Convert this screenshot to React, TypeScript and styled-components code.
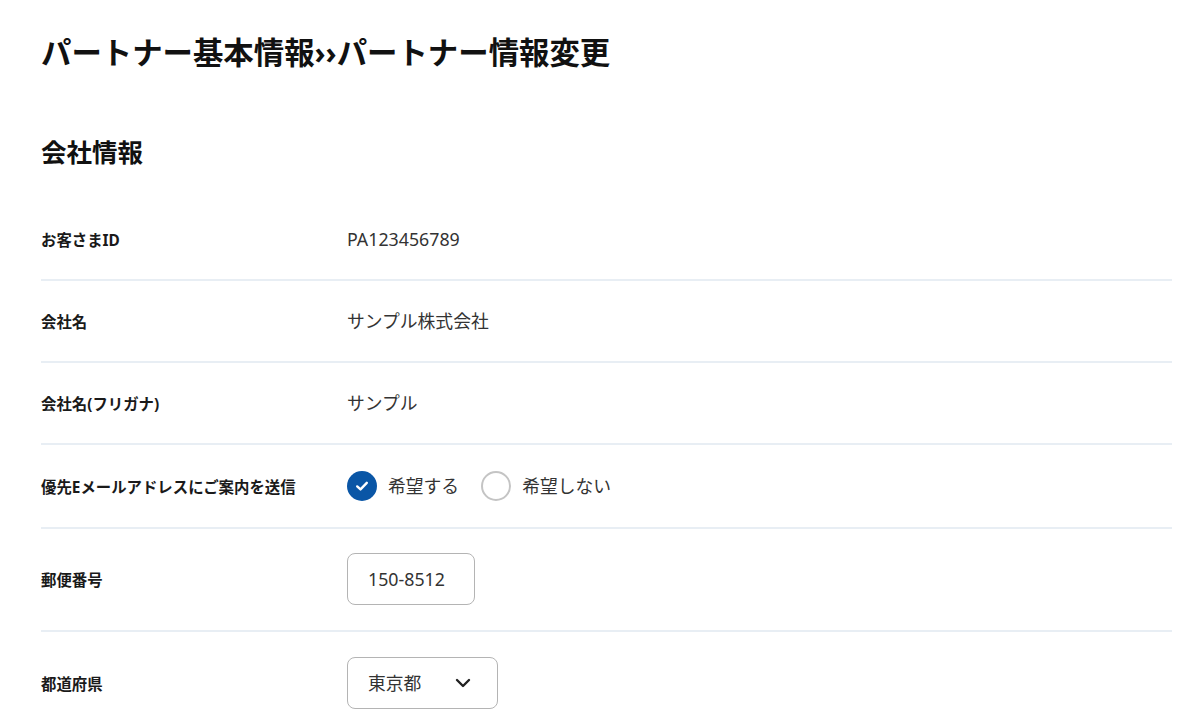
import React from 'react';
import styled, { createGlobalStyle } from 'styled-components';

const FONT = `"Noto Sans", "Noto Sans CJK JP", sans-serif`;
const BORDER = '#e8eef4';

const GlobalStyle = createGlobalStyle`
    body {
        margin: 0;
        background: #fff;
        font-family: ${FONT};
        color: #222;
    }
`;

const Page = styled.div`
    padding: 32px 28px 0 41px;
`;

const PageTitle = styled.h1`
    margin: 0;
    font-size: 30.4px;
    line-height: 42px;
    font-weight: 700;
    color: #111;
`;

const SectionTitle = styled.h2`
    margin: 60px 0 29px;
    font-size: 25.5px;
    line-height: 36px;
    font-weight: 700;
    color: #111;
`;

const Table = styled.div`
    display: flex;
    flex-direction: column;
`;

const Row = styled.div`
    display: grid;
    grid-template-columns: 306px 1fr;
`;

const LabelCell = styled.div`
    display: flex;
    align-items: center;
    border-bottom: 2px solid ${BORDER};
    font-size: 15.4px;
    font-weight: 700;
    color: #1a1a1a;
`;

type ValueCellProps = {
    $pad: number;
    $padBottom?: number;
};

const ValueCell = styled.div<ValueCellProps>`
    display: flex;
    align-items: center;
    padding: ${(p) => p.$pad}px 0 ${(p) => p.$padBottom ?? p.$pad}px;
    border-bottom: 2px solid ${BORDER};
    font-size: 17.8px;
    line-height: 26px;
    color: #333;
`;

const RadioGroup = styled.div`
    display: flex;
    align-items: center;
    gap: 22px;
`;

const RadioItem = styled.label`
    display: flex;
    align-items: center;
    gap: 11px;
    font-size: 17.8px;
    color: #333;
`;

type RadioMarkProps = {
    $checked?: boolean;
};

const RadioMark = styled.span<RadioMarkProps>`
    width: 30px;
    height: 30px;
    box-sizing: border-box;
    border-radius: 50%;
    display: flex;
    align-items: center;
    justify-content: center;
    background: ${(p) => (p.$checked ? '#0a56a6' : '#fff')};
    border: ${(p) => (p.$checked ? 'none' : '2px solid #c4c4c4')};
`;

const TextBox = styled.div`
    width: 128px;
    height: 52px;
    box-sizing: border-box;
    border: 1.5px solid #b4b4b4;
    border-radius: 8px;
    display: flex;
    align-items: center;
    padding-left: 20px;
    font-size: 17.8px;
    color: #333;
`;

const SelectBox = styled(TextBox)`
    width: 151px;
    justify-content: space-between;
    padding-right: 26px;
`;

const CheckIcon = () => (
    <svg width="16" height="16" viewBox="0 0 16 16" fill="none">
        <path d="M3.2 8.4 L6.5 11.4 L12.8 4.8" stroke="#fff" strokeWidth="2.4" strokeLinecap="round" strokeLinejoin="round" />
    </svg>
);

const ChevronIcon = () => (
    <svg width="16" height="12" viewBox="0 0 16 12" fill="none">
        <path d="M2 3 L8 9 L14 3" stroke="#222" strokeWidth="2.4" strokeLinecap="round" strokeLinejoin="round" />
    </svg>
);

const App: React.FC = () => {
    return (
        <Page>
            <GlobalStyle />
            <PageTitle>パートナー基本情報››パートナー情報変更</PageTitle>
            <SectionTitle>会社情報</SectionTitle>

            <Table>
                <Row>
                    <LabelCell>お客さまID</LabelCell>
                    <ValueCell $pad={27}>PA123456789</ValueCell>
                </Row>
                <Row>
                    <LabelCell>会社名</LabelCell>
                    <ValueCell $pad={27}>サンプル株式会社</ValueCell>
                </Row>
                <Row>
                    <LabelCell>会社名(フリガナ)</LabelCell>
                    <ValueCell $pad={27}>サンプル</ValueCell>
                </Row>
                <Row>
                    <LabelCell>優先Eメールアドレスにご案内を送信</LabelCell>
                    <ValueCell $pad={26}>
                        <RadioGroup>
                            <RadioItem>
                                <RadioMark $checked>
                                    <CheckIcon />
                                </RadioMark>
                                希望する
                            </RadioItem>
                            <RadioItem>
                                <RadioMark />
                                希望しない
                            </RadioItem>
                        </RadioGroup>
                    </ValueCell>
                </Row>
                <Row>
                    <LabelCell>郵便番号</LabelCell>
                    <ValueCell $pad={24} $padBottom={25}>
                        <TextBox>150-8512</TextBox>
                    </ValueCell>
                </Row>
                <Row>
                    <LabelCell>都道府県</LabelCell>
                    <ValueCell $pad={25}>
                        <SelectBox>
                            東京都
                            <ChevronIcon />
                        </SelectBox>
                    </ValueCell>
                </Row>
            </Table>
        </Page>
    );
};

export default App;
